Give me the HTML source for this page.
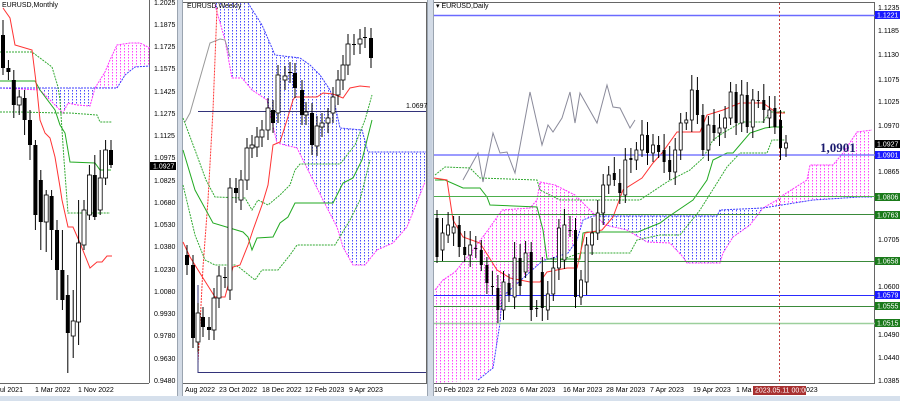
<!DOCTYPE html>
<html><head><meta charset="utf-8"><style>
html,body{margin:0;padding:0;background:#fff;width:900px;height:401px;overflow:hidden}
svg{display:block}
text{font-family:"Liberation Sans",sans-serif;font-size:7px;fill:#000}
</style></head><body>
<svg id="s" width="900" height="401" viewBox="0 0 900 401" xmlns="http://www.w3.org/2000/svg">
<defs>
<pattern id="pb" width="4" height="3" patternUnits="userSpaceOnUse"><rect width="1" height="1.5" fill="#4a4aff"/></pattern>
<pattern id="pm" width="4" height="3" patternUnits="userSpaceOnUse"><rect width="1" height="1.5" fill="#ff44ff"/></pattern>
</defs>
<rect width="900" height="401" fill="#fff"/>
<!-- frames -->
<rect x="177" y="0" width="6" height="401" fill="#d3dbe6"/>
<line x1="177.5" y1="0" x2="177.5" y2="401" stroke="#9aa4b0"/>
<line x1="182.5" y1="0" x2="182.5" y2="401" stroke="#9aa4b0"/>
<rect x="427" y="0" width="7" height="401" fill="#d3dbe6"/>
<line x1="427.5" y1="0" x2="427.5" y2="401" stroke="#9aa4b0"/>
<line x1="433.5" y1="0" x2="433.5" y2="401" stroke="#9aa4b0"/>
<rect x="428" y="40" width="4" height="150" fill="#c6d0de"/>
<rect x="0" y="396" width="900" height="5" fill="#d6e0ec"/>
<!-- axes lines -->
<line x1="149.5" y1="0" x2="149.5" y2="383" stroke="#666"/>
<line x1="0" y1="383.5" x2="149" y2="383.5" stroke="#666"/>
<line x1="183" y1="2.5" x2="427" y2="2.5" stroke="#666"/>
<line x1="426.5" y1="2" x2="426.5" y2="383" stroke="#666"/>
<line x1="183" y1="383.5" x2="427" y2="383.5" stroke="#666"/>
<line x1="434" y1="2.5" x2="875" y2="2.5" stroke="#666"/>
<line x1="874.5" y1="2" x2="874.5" y2="383" stroke="#666"/>
<line x1="434" y1="383.5" x2="875" y2="383.5" stroke="#666"/>

<!-- MONTHLY -->
<polygon points="40,88 95,88 90,106 77,105 68,103 63,113 55,105" fill="url(#pb)"/>
<polyline points="0,88 40,90 55,105 63,113 68,103 77,105 90,106 95,88" fill="none" stroke="#ff33ff" stroke-dasharray="2,1"/>
<polygon points="95,88 105,72 110,60 117,45 130,43 140,43 150,48 150,66 135,67 125,75 117,88" fill="url(#pm)"/>
<polyline points="95,88 105,72 110,60 117,45 130,43 140,43 150,48" fill="none" stroke="#ff33ff" stroke-dasharray="2,1"/>
<polyline points="0,88 117,88 125,75 135,67 150,66" fill="none" stroke="#3b3bff" stroke-dasharray="2,1"/>
<polyline points="0,52 32,52 52,67 58,87 60,100 62,130 64,160 67,200 68,213 110,213" fill="none" stroke="#3a3" stroke-dasharray="2,1"/>
<polyline points="0,112 20,112 60,113 70,113 97,115 100,122 112,122" fill="none" stroke="#3a3" stroke-dasharray="2,1"/>
<polyline points="0,81 35,81 40,90 55,110 60,125 65,133 70,162 95,163 100,170 111,170" fill="none" stroke="#2a2" stroke-width="1"/>
<polyline points="3,8 10,18 15,45 32,50 37,90 40,120 45,133 50,138 55,157 60,187 62,200 68,227 73,227 80,243 90,268 97,262 102,262 107,256 112,256" fill="none" stroke="#f33"/>
<g id="mc"></g>

<!-- WEEKLY -->
<polygon points="215,3 248,3 262,25 275,55 300,58 310,65 320,75 330,90 335,105 340,128 362,130 368,152 426,152 425,182 407,227 393,243 377,250 365,265 353,265 343,247 337,227 323,200 297,148 277,143 267,100 252,90 242,78 232,78 225,40" fill="url(#pb)"/>
<polyline points="248,3 262,25 275,55 300,58 310,65 320,75 330,90 335,105 340,128 362,130 368,152 426,152" fill="none" stroke="#3b3bff" stroke-dasharray="2,1"/>
<polyline points="215,5 225,40 232,78 242,78 252,90 267,100 277,143 297,148 323,200 337,227 343,247 353,265 365,265 377,250 393,243 407,227 425,182" fill="none" stroke="#ff33ff" stroke-dasharray="2,1"/>
<polyline points="185,122 190,113 210,43 220,39 225,40 230,57" fill="none" stroke="#999"/>
<polyline points="198,363 203,267 208,200 213,110 217,8" fill="none" stroke="#f33" stroke-dasharray="2,1"/>
<polyline points="183,118 195,150 206,180 215,197 245,198 252,210 258,200 268,205 280,195 290,185 295,170 300,164 340,164 355,145 365,120 372,95" fill="none" stroke="#3a3" stroke-dasharray="2,1"/>
<polyline points="183,185 195,235 205,260 215,265 235,265 240,268 255,280 262,270 278,270 290,255 297,245 335,245 350,220 360,200 365,180 370,160" fill="none" stroke="#3a3" stroke-dasharray="2,1"/>
<polyline points="183,150 195,190 213,223 243,232 248,237 252,250 257,238 273,237 280,223 288,217 295,203 333,203 343,183 353,178 362,160 367,140 372,120" fill="none" stroke="#2a2"/>
<polyline points="183,242 190,257 203,278 215,297 225,297 233,267 240,265 248,245 253,230 262,205 268,185 273,145 280,142 287,120 293,100 295,97 317,97 323,93 333,94 343,98 350,88 360,86 370,87" fill="none" stroke="#f33"/>
<line x1="198" y1="111.5" x2="426" y2="111.5" stroke="#33337a"/>
<polyline points="198,285 198,372.5 426,372.5" fill="none" stroke="#33337a"/>
<text x="406" y="108" fill="#333">1.0697</text>
<g id="wc"></g>

<!-- DAILY -->
<polygon points="435,290 443,280 455,272 473,250 488,230 502,210 530,208 537,200 540,182 555,185 575,195 590,210 600,215 593,216 583,220 577,240 568,253 553,258 545,260 540,263 502,297 500,323 493,368 478,380 435,383" fill="url(#pm)"/>
<polyline points="435,290 443,280 455,272 473,250 488,230 502,210 530,208 537,200 540,182 555,185 575,195 590,210 605,225 627,230 647,242 670,243 683,257 687,263 720,263 723,253 733,237 750,225 763,208 777,200 780,197 807,180 810,165 833,165 843,153 857,132 872,130" fill="none" stroke="#ff33ff" stroke-dasharray="2,1"/>
<polygon points="600,216 717,216 720,210 763,208 750,225 733,237 723,253 720,263 687,263 683,257 670,243 647,242 627,230 605,225" fill="url(#pb)"/>
<polygon points="777,200 780,197 807,180 810,165 833,165 843,153 857,132 872,130 872,197 860,197 813,200 763,208" fill="url(#pm)"/>
<polyline points="478,380 493,368 500,323 502,297 540,263 545,260 553,258 568,253 577,240 583,220 593,216 717,216 720,210 763,208 813,200 860,197 872,197" fill="none" stroke="#3b3bff" stroke-dasharray="2,1"/>
<polyline points="463,180 478,153 483,182 493,133 500,153 507,152 515,173 530,92 542,145 548,125 553,132 562,118 570,92 575,123 580,93 597,123 607,85 613,107 620,108 630,128 635,120" fill="none" stroke="#8a8a9a"/>
<polyline points="435,175 445,167 470,168 480,178 537,180 540,190 560,200 580,200 593,200 640,200 667,182 690,170 703,158 713,140 723,133 742,122 763,122 770,112 785,112" fill="none" stroke="#3a3" stroke-dasharray="2,1"/>
<polyline points="555,262 580,253 630,253 637,240 660,235 680,235 700,210 717,183 727,167 740,153 767,153 772,140 785,140" fill="none" stroke="#3a3" stroke-dasharray="2,1"/>
<polyline points="435,180 445,180 463,188 480,188 487,197 490,205 537,207 543,230 547,259 580,259 583,233 587,232 627,232 638,232 660,223 668,217 693,200 707,180 713,160 727,153 733,153 750,133 765,128 772,127 783,127" fill="none" stroke="#2a2"/>
<polyline points="434,178 447,180 453,220 463,237 480,243 497,270 510,278 530,282 540,282 547,272 567,268 577,268 585,233 602,230 613,217 623,190 642,178 653,163 662,153 677,132 700,132 707,115 723,110 740,103 763,103 777,113 785,113" fill="none" stroke="#f33"/>
<line x1="434" y1="15.5" x2="875" y2="15.5" stroke="#6a6aff" stroke-width="1.5"/>
<line x1="434" y1="155" x2="875" y2="155" stroke="#7a7aff" stroke-width="1.5"/>
<line x1="434" y1="196.5" x2="875" y2="196.5" stroke="#4caf4c"/>
<line x1="434" y1="214.5" x2="875" y2="214.5" stroke="#3a8a3a"/>
<line x1="434" y1="261.5" x2="875" y2="261.5" stroke="#3a8a3a"/>
<line x1="434" y1="295.5" x2="875" y2="295.5" stroke="#2a2aff"/>
<line x1="434" y1="306.5" x2="875" y2="306.5" stroke="#3a8a3a"/>
<line x1="434" y1="323.5" x2="875" y2="323.5" stroke="#9ccf9c" stroke-width="1.5"/>
<line x1="779.5" y1="3" x2="779.5" y2="384" stroke="#c04040" stroke-dasharray="2,2"/>
<g id="dc"></g>
<text x="820" y="152" style="font-family:'Liberation Serif',serif;font-size:13px;font-weight:bold;fill:#1a1a6e">1,0901</text>

<!-- titles -->
<text x="2" y="7" fill="#333">EURUSD,Monthly</text>
<text x="187" y="8" fill="#333">EURUSD,Weekly</text>
<text x="436" y="8" fill="#333">▾ EURUSD,Daily</text>

<g>
<text x="154" y="5">1.2025</text><text x="154" y="27">1.1875</text><text x="154" y="49">1.1725</text><text x="154" y="71">1.1575</text><text x="154" y="94">1.1425</text><text x="154" y="116">1.1275</text><text x="154" y="138">1.1125</text><text x="154" y="160">1.0975</text>
<rect x="150" y="162" width="26" height="8" fill="#000"/><text x="153" y="168.5" style="fill:#fff">1.0927</text>
<text x="154" y="183">1.0825</text><text x="154" y="205">1.0680</text><text x="154" y="227">1.0530</text><text x="154" y="249">1.0380</text><text x="154" y="272">1.0230</text><text x="154" y="294">1.0080</text><text x="154" y="316">0.9930</text><text x="154" y="338">0.9780</text><text x="154" y="361">0.9630</text><text x="154" y="383">0.9480</text>
<text x="0" y="392">ul 2021</text><text x="35" y="392">1 Mar 2022</text><text x="78" y="392">1 Nov 2022</text>
<text x="185" y="392">Aug 2022</text><text x="219" y="392">23 Oct 2022</text><text x="262" y="392">18 Dec 2022</text><text x="305" y="392">12 Feb 2023</text><text x="349" y="392">9 Apr 2023</text>
<text x="434" y="392">10 Feb 2023</text><text x="477" y="392">22 Feb 2023</text><text x="520" y="392">6 Mar 2023</text><text x="563" y="392">16 Mar 2023</text><text x="606" y="392">28 Mar 2023</text><text x="650" y="392">7 Apr 2023</text><text x="693" y="392">19 Apr 2023</text><text x="736" y="392">1 Ma</text>
<rect x="753" y="386" width="53" height="9" fill="#a83030"/><text x="755" y="392.5" style="fill:#fff">2023.05.11 00:00</text><text x="806" y="392">023</text>
</g>
<g>
<text x="878" y="10">1.1235</text><text x="878" y="33">1.1185</text><text x="878" y="57">1.1130</text><text x="878" y="82">1.1075</text><text x="878" y="104">1.1025</text><text x="878" y="128">1.0970</text><text x="878" y="174">1.0865</text><text x="878" y="242">1.0705</text><text x="878" y="289">1.0600</text><text x="878" y="337">1.0490</text><text x="878" y="360">1.0440</text><text x="878" y="383">1.0385</text>
<rect x="875" y="11" width="25" height="8" fill="#1a1aff"/><text x="877" y="17.5" style="fill:#fff">1.1221</text>
<rect x="875" y="140" width="25" height="8" fill="#000"/><text x="877" y="146.5" style="fill:#fff">1.0927</text>
<rect x="875" y="151" width="25" height="8" fill="#1a1aff"/><text x="877" y="157.5" style="fill:#fff">1.0901</text>
<rect x="875" y="193" width="25" height="8" fill="#1a7a1a"/><text x="877" y="199.5" style="fill:#fff">1.0806</text>
<rect x="875" y="211" width="25" height="8" fill="#1a7a1a"/><text x="877" y="217.5" style="fill:#fff">1.0763</text>
<rect x="875" y="257" width="25" height="8" fill="#1a7a1a"/><text x="877" y="263.5" style="fill:#fff">1.0658</text>
<rect x="875" y="291" width="25" height="8" fill="#1a1aff"/><text x="877" y="297.5" style="fill:#fff">1.0579</text>
<rect x="875" y="302" width="25" height="8" fill="#1a7a1a"/><text x="877" y="308.5" style="fill:#fff">1.0555</text>
<rect x="875" y="319" width="25" height="8" fill="#1a7a1a"/><text x="877" y="325.5" style="fill:#fff">1.0515</text>
</g>
</svg>
<script>
function C(g,x,o,c,h,l,w){var s='';var t=Math.min(o,c),b=Math.max(o,c);if(b-t<1)b=t+1;
s+='<line x1="'+x+'" y1="'+h+'" x2="'+x+'" y2="'+l+'" stroke="#000"/>';
if(c<o)s+='<rect x="'+(x-w/2)+'" y="'+t+'" width="'+w+'" height="'+(b-t)+'" fill="#fff" stroke="#000" stroke-width="0.8"/>';
else s+='<rect x="'+(x-w/2)+'" y="'+t+'" width="'+w+'" height="'+(b-t)+'" fill="#000"/>';
return s;}
var M=[[35,68,20,75],[68,72,60,80],[80,105,70,118],[105,97,90,115],[98,120,90,135],[120,145,110,160],[145,215,140,230],[180,222,170,250],[222,195,190,252],[196,230,190,260],[230,270,220,300],[270,300,230,310],[295,333,275,373],[336,321,290,358],[322,243,200,345],[245,210,200,250],[215,175,165,220],[175,217,155,220],[210,178,150,215],[178,150,140,185],[150,165,140,168]];
var s='';M.forEach(function(a,i){s+=C(0,(3+i*5.4).toFixed(1),a[0],a[1],a[2],a[3],4)});document.getElementById('mc').innerHTML=s;
var W=[[187,255,265],[193,265,338],[198,342,313],[203,317,327],[209,327,330],[214,330,298],[219,298,276],[225,277,278],[230,290,188],[236,188,193],[241,200,180],[247,180,148],[252,148,145],[257,147,137],[262,137,130],[268,130,108],[273,110,123],[278,113,75],[285,80,76],[290,72,73],[295,73,88],[302,90,115],[306,115,112],[312,113,145],[317,146,126],[322,127,123],[328,123,118],[333,113,97],[338,95,80],[343,80,65],[348,65,44],[354,44,45],[360,44,39],[365,37,38],[371,38,58]];
s='';W.forEach(function(a){var t=Math.min(a[1],a[2]),b=Math.max(a[1],a[2]);s+=C(0,a[0],a[1],a[2],t-10,b+10,4)});document.getElementById('wc').innerHTML=s;
var D=[[218,257],[250,233],[235,225],[233,227],[225,247],[247,255],[255,245],[248,249],[250,265],[265,283],[286,287],[288,310],[310,282],[283,295],[297,258],[258,286],[272,253],[252,310],[308,309],[272,308],[310,294],[294,268],[268,228],[260,225],[230,231],[230,297],[297,280],[282,245],[245,233],[233,213],[213,185],[185,175],[173,180],[183,193],[195,160],[158,160],[160,150],[150,135],[135,153],[153,145],[145,152],[150,162],[160,172],[172,150],[150,123],[123,120],[120,90],[90,115],[115,150],[150,125],[125,133],[133,128],[128,118],[118,92],[92,123],[123,95],[95,127],[127,100],[100,100],[100,110],[118,110],[108,127],[120,148],[148,143]];
s='';var st=(786-437)/(D.length-1);D.forEach(function(a,i){var t=Math.min(a[0],a[1]),b=Math.max(a[0],a[1]);s+=C(0,(437+i*st).toFixed(1),a[0],a[1],t-8-(i*7%9),b+6+(i*5%8),3)});document.getElementById('dc').innerHTML=s;
</script>
</body></html>
